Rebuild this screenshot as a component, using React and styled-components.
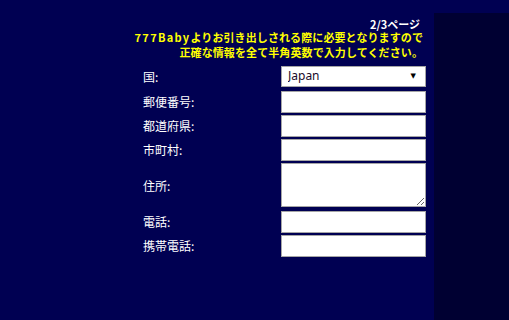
import React from "react";
import styled, { createGlobalStyle } from "styled-components";

const Global = createGlobalStyle`
  html, body { margin: 0; padding: 0; background: #000052; }
  body { font-family: "Noto Sans CJK JP", "Noto Sans", sans-serif; }
`;

const Page = styled.div`
  display: flex;
  width: 509px;
  height: 320px;
  background: #000052;
  overflow: hidden;
`;

const Main = styled.div`
  width: 434px;
  flex: none;
`;

const Side = styled.div`
  flex: 1;
  margin-top: 13px;
  background: #000032;
`;

const Block = styled.div`
  margin-left: 128px;
  width: 298px;
`;

const Header = styled.div`
  margin-top: 18px;
  padding-right: 6px;
  text-align: right;
  color: #ffffff;
  font-weight: bold;
  font-size: 11px;
  line-height: 12px;
`;

const Notice = styled.div`
  padding-right: 3px;
  text-align: right;
  white-space: nowrap;
  color: #ffff00;
  font-weight: bold;
  font-size: 11px;
  line-height: 15px;
  letter-spacing: 0.1px;
`;

const Latin = styled.span`
  letter-spacing: 1.3px;
`;

const Form = styled.div`
  margin-top: 5px;
  margin-left: 15px;
  display: flex;
  flex-direction: column;
  gap: 2px;
`;

const Row = styled.div`
  display: flex;
  align-items: ${(p) => (p.$top ? "flex-start" : "center")};
  height: ${(p) => p.$h}px;
`;

const Label = styled.div`
  width: 138px;
  flex: none;
  color: #ffffff;
  font-size: 12px;
  line-height: 14px;
  align-self: center;
`;

const Field = styled.input`
  box-sizing: border-box;
  width: 145px;
  height: 22px;
  margin: 0;
  border: 1px solid #a6a6a6;
  background: #ffffff;
  outline: none;
`;

const Area = styled.textarea`
  box-sizing: border-box;
  width: 145px;
  height: 44px;
  margin: 0;
  border: 1px solid #a6a6a6;
  background: #ffffff;
  outline: none;
  display: block;
`;

const SelectWrap = styled.div`
  position: relative;
  width: 145px;
  height: 21px;
  margin-top: 1px;
  align-self: flex-start;
`;

const Select = styled.select`
  appearance: none;
  -webkit-appearance: none;
  box-sizing: border-box;
  display: block;
  width: 145px;
  height: 21px;
  margin: 0;
  padding: 0 0 3px 6px;
  border: 1px solid #a6a6a6;
  border-radius: 0;
  background: #ffffff;
  color: #1a0a2a;
  font-family: "Noto Sans", "Noto Sans CJK JP", sans-serif;
  font-size: 12px;
  line-height: 15px;
  outline: none;
`;

const Arrow = styled.span`
  position: absolute;
  right: 10px;
  top: 6px;
  font-size: 7px;
  line-height: 9px;
  color: #000;
  pointer-events: none;
  font-family: "DejaVu Sans", sans-serif;
`;

export default function App() {
  return (
    <>
      <Global />
      <Page>
        <Main>
          <Block>
            <Header>2/3ページ</Header>
            <Notice>
              <Latin>777Baby</Latin>よりお引き出しされる際に必要となりますので
              <br />
              正確な情報を全て半角英数で入力してください。
            </Notice>
            <Form>
              <Row $h={24} $top>
                <Label>国:</Label>
                <SelectWrap>
                  <Select defaultValue="Japan">
                    <option value="Japan">Japan</option>
                  </Select>
                  <Arrow>▼</Arrow>
                </SelectWrap>
              </Row>
              <Row $h={22}>
                <Label>郵便番号:</Label>
                <Field />
              </Row>
              <Row $h={22}>
                <Label>都道府県:</Label>
                <Field />
              </Row>
              <Row $h={22}>
                <Label>市町村:</Label>
                <Field />
              </Row>
              <Row $h={46} $top>
                <Label>住所:</Label>
                <Area />
              </Row>
              <Row $h={22}>
                <Label>電話:</Label>
                <Field />
              </Row>
              <Row $h={22}>
                <Label>携帯電話:</Label>
                <Field />
              </Row>
            </Form>
          </Block>
        </Main>
        <Side />
      </Page>
    </>
  );
}
